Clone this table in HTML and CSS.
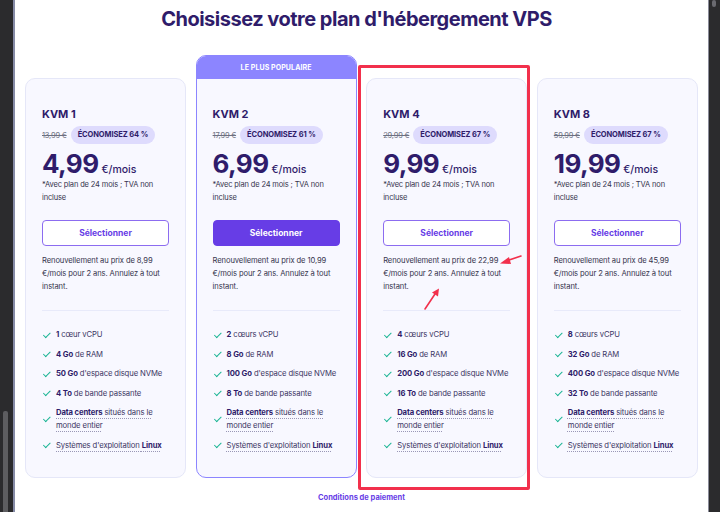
FILE: index.html
```html
<!DOCTYPE html>
<html lang="fr">
<head>
<meta charset="utf-8">
<title>Plans VPS</title>
<link rel="stylesheet" href="styles.css">
</head>
<body>
<div class="screen">
  <div class="frame-left"><div class="thumb-left"></div></div>
  <main class="page">
    <h1 class="title">Choisissez votre plan d'hébergement VPS</h1>
    <div class="cards">
      <div class="card">
        <div class="card-body">
          <h3 class="plan">KVM 1</h3>
          <div class="old-row"><span class="old">13,99 €</span><span class="badge">ÉCONOMISEZ 64 %</span></div>
          <div class="price"><span class="amount">4,99</span><span class="per">€/mois</span></div>
          <p class="note">*Avec plan de 24 mois ; TVA non<br>incluse</p>
          <button class="btn">Sélectionner</button>
          <p class="renew">Renouvellement au prix de 8,99<br>€/mois pour 2 ans. Annulez à tout<br>instant.</p>
          <hr class="divider">
          <ul class="features">
            <li><span class="check"></span><span><b>1</b> cœur vCPU</span></li>
            <li><span class="check"></span><span><b>4 Go</b> de RAM</span></li>
            <li><span class="check"></span><span><b>50 Go</b> d'espace disque NVMe</span></li>
            <li><span class="check"></span><span><b>4 To</b> de bande passante</span></li>
            <li><span class="check"></span><span class="dotted"><b>Data centers</b> situés dans le<br>monde entier</span></li>
            <li><span class="check"></span><span class="dotted">Systèmes d'exploitation <b>Linux</b></span></li>
          </ul>
        </div>
      </div>
      <div class="card popular">
        <div class="banner">LE PLUS POPULAIRE</div>
        <div class="card-body">
          <h3 class="plan">KVM 2</h3>
          <div class="old-row"><span class="old">17,99 €</span><span class="badge">ÉCONOMISEZ 61 %</span></div>
          <div class="price"><span class="amount">6,99</span><span class="per">€/mois</span></div>
          <p class="note">*Avec plan de 24 mois ; TVA non<br>incluse</p>
          <button class="btn btn-filled">Sélectionner</button>
          <p class="renew">Renouvellement au prix de 10,99<br>€/mois pour 2 ans. Annulez à tout<br>instant.</p>
          <hr class="divider">
          <ul class="features">
            <li><span class="check"></span><span><b>2</b> cœurs vCPU</span></li>
            <li><span class="check"></span><span><b>8 Go</b> de RAM</span></li>
            <li><span class="check"></span><span><b>100 Go</b> d'espace disque NVMe</span></li>
            <li><span class="check"></span><span><b>8 To</b> de bande passante</span></li>
            <li><span class="check"></span><span class="dotted"><b>Data centers</b> situés dans le<br>monde entier</span></li>
            <li><span class="check"></span><span class="dotted">Systèmes d'exploitation <b>Linux</b></span></li>
          </ul>
        </div>
      </div>
      <div class="card">
        <div class="card-body">
          <h3 class="plan">KVM 4</h3>
          <div class="old-row"><span class="old">29,99 €</span><span class="badge">ÉCONOMISEZ 67 %</span></div>
          <div class="price"><span class="amount">9,99</span><span class="per">€/mois</span></div>
          <p class="note">*Avec plan de 24 mois ; TVA non<br>incluse</p>
          <button class="btn">Sélectionner</button>
          <p class="renew">Renouvellement au prix de 22,99<br>€/mois pour 2 ans. Annulez à tout<br>instant.</p>
          <hr class="divider">
          <ul class="features">
            <li><span class="check"></span><span><b>4</b> cœurs vCPU</span></li>
            <li><span class="check"></span><span><b>16 Go</b> de RAM</span></li>
            <li><span class="check"></span><span><b>200 Go</b> d'espace disque NVMe</span></li>
            <li><span class="check"></span><span><b>16 To</b> de bande passante</span></li>
            <li><span class="check"></span><span class="dotted"><b>Data centers</b> situés dans le<br>monde entier</span></li>
            <li><span class="check"></span><span class="dotted">Systèmes d'exploitation <b>Linux</b></span></li>
          </ul>
        </div>
      </div>
      <div class="card">
        <div class="card-body">
          <h3 class="plan">KVM 8</h3>
          <div class="old-row"><span class="old">59,99 €</span><span class="badge">ÉCONOMISEZ 67 %</span></div>
          <div class="price"><span class="amount">19,99</span><span class="per">€/mois</span></div>
          <p class="note">*Avec plan de 24 mois ; TVA non<br>incluse</p>
          <button class="btn">Sélectionner</button>
          <p class="renew">Renouvellement au prix de 45,99<br>€/mois pour 2 ans. Annulez à tout<br>instant.</p>
          <hr class="divider">
          <ul class="features">
            <li><span class="check"></span><span><b>8</b> cœurs vCPU</span></li>
            <li><span class="check"></span><span><b>32 Go</b> de RAM</span></li>
            <li><span class="check"></span><span><b>400 Go</b> d'espace disque NVMe</span></li>
            <li><span class="check"></span><span><b>32 To</b> de bande passante</span></li>
            <li><span class="check"></span><span class="dotted"><b>Data centers</b> situés dans le<br>monde entier</span></li>
            <li><span class="check"></span><span class="dotted">Systèmes d'exploitation <b>Linux</b></span></li>
          </ul>
        </div>
      </div>
    </div>
    <a class="terms" href="#">Conditions de paiement</a>

    <div class="highlight"></div>
    <svg class="arrows" width="693" height="512" viewBox="0 0 693 512" aria-hidden="true">
      <line x1="506" y1="256" x2="490" y2="261.5" stroke="#f2304c" stroke-width="1.6" stroke-linecap="round"/>
      <polygon points="485,263.5 494,257 496,264" fill="#f2304c"/>
      <line x1="410" y1="309" x2="420" y2="294" stroke="#f2304c" stroke-width="1.6" stroke-linecap="round"/>
      <polygon points="424,288.5 417,292.5 423,296.5" fill="#f2304c"/>
    </svg>
  </main>
  <div class="frame-right"><div class="thumb-right"></div></div>
</div>
</body>
</html>
```

FILE: styles.css
```css
* { box-sizing: border-box; }

html, body {
  margin: 0;
  padding: 0;
  background: #ffffff;
}

body {
  font-family: "Inter", "Noto Sans", sans-serif;
  color: #36344d;
}

.screen {
  display: flex;
  width: 720px;
  height: 512px;
  overflow: hidden;
}

.frame-left {
  position: relative;
  width: 15px;
  flex: none;
  background: #2b2b2d;
  border-right: 2px solid #868ba6;
}

.thumb-left {
  position: absolute;
  left: 3px;
  top: 411px;
  width: 5px;
  height: 110px;
  background: #5d5d60;
  border-radius: 2px;
}

.frame-right {
  position: relative;
  width: 12px;
  flex: none;
  background: #2b2b2d;
  border-left: 1px solid #8a8c99;
}

.thumb-right {
  position: absolute;
  left: 3px;
  top: 0;
  width: 4px;
  height: 7px;
  background: #6a6a70;
  border-radius: 2px;
}

.page {
  position: relative;
  flex: 1;
  display: flex;
  flex-direction: column;
  align-items: stretch;
}

.title {
  margin: 5px 0 0;
  padding-right: 10px;
  height: 28px;
  text-align: center;
  font-size: 20px;
  line-height: 28px;
  font-weight: 700;
  letter-spacing: -0.5px;
  color: #2f1c6a;
}

.cards {
  display: grid;
  grid-template-columns: repeat(4, 161px);
  column-gap: 9.6px;
  align-items: end;
  padding-left: 10px;
  margin-top: 22px;
}

.card {
  background: #f8f8ff;
  border: 1px solid #e5e7f8;
  border-radius: 10px;
  overflow: hidden;
}

.card.popular {
  border: 1.5px solid #8c85ff;
}

.banner {
  height: 23px;
  background: #8c85ff;
  color: #ffffff;
  font-size: 7px;
  font-weight: 700;
  line-height: 23px;
  text-align: center;
  letter-spacing: 0.1px;
}

.card-body {
  padding: 27px 16px 25px 16px;
  display: flex;
  flex-direction: column;
  align-items: flex-start;
}

.card-body > * {
  flex-shrink: 0;
}

.plan {
  margin: 0;
  font-size: 11px;
  line-height: 16px;
  font-weight: 700;
  color: #2f1c6a;
}

.old-row {
  display: flex;
  align-items: center;
  gap: 4px;
  margin-top: 4px;
  height: 18px;
}

.old {
  font-size: 7.5px;
  color: #6d7081;
  text-decoration: line-through;
  letter-spacing: -0.2px;
}

.badge {
  height: 18px;
  padding: 0 7px;
  border-radius: 9px;
  background: #dedbfd;
  color: #2f1c6a;
  font-size: 7.5px;
  font-weight: 700;
  line-height: 18px;
  letter-spacing: -0.1px;
}

.price {
  display: flex;
  align-items: baseline;
  gap: 3px;
  margin-top: 5px;
  height: 29px;
  color: #2f1c6a;
}

.amount {
  font-size: 26px;
  line-height: 29px;
  font-weight: 700;
  letter-spacing: -0.6px;
}

.per {
  font-size: 10.5px;
  font-weight: 500;
}

.note {
  margin: 0;
  font-size: 7.5px;
  line-height: 13px;
  color: #36344d;
  letter-spacing: -0.15px;
  white-space: nowrap;
}

.btn {
  margin-top: 16px;
  width: 100%;
  height: 26px;
  border: 1.5px solid #8c6cf0;
  border-radius: 4px;
  background: #ffffff;
  color: #673de6;
  font-family: inherit;
  font-size: 8.5px;
  font-weight: 700;
  cursor: pointer;
}

.btn-filled {
  background: #673de6;
  border-color: #673de6;
  color: #ffffff;
}

.renew {
  margin: 8px 0 0;
  font-size: 7.6px;
  line-height: 13px;
  color: #36344d;
  letter-spacing: -0.1px;
  white-space: nowrap;
}

.divider {
  width: 100%;
  margin: 17px 0 0;
  border: 0;
  border-top: 1.5px solid #e8eafa;
}

.features {
  list-style: none;
  margin: 17px 0 0;
  padding: 0;
  display: flex;
  flex-direction: column;
  gap: 6.5px;
}

.features li {
  display: flex;
  align-items: center;
  gap: 5px;
  font-size: 7.7px;
  line-height: 13px;
  color: #3b3563;
  letter-spacing: -0.12px;
  white-space: nowrap;
}

.features b {
  color: #2f1c6a;
  font-weight: 700;
}

.check {
  flex: none;
  width: 7px;
  height: 4px;
  margin-left: 2px;
  border-left: 1.3px solid #1bb594;
  border-bottom: 1.3px solid #1bb594;
  transform: rotate(-45deg) translateY(-1px);
}

.dotted {
  text-decoration: underline dotted #9a97b6;
  text-underline-offset: 2.5px;
}

.terms {
  align-self: center;
  margin-top: 15px;
  color: #673de6;
  font-size: 7.5px;
  font-weight: 700;
  text-decoration: none;
}

.highlight {
  position: absolute;
  left: 343px;
  top: 65px;
  width: 172px;
  height: 425px;
  border: 3px solid #f2304c;
  border-radius: 2px;
  pointer-events: none;
}

.arrows {
  position: absolute;
  left: 0;
  top: 0;
  pointer-events: none;
}
```
